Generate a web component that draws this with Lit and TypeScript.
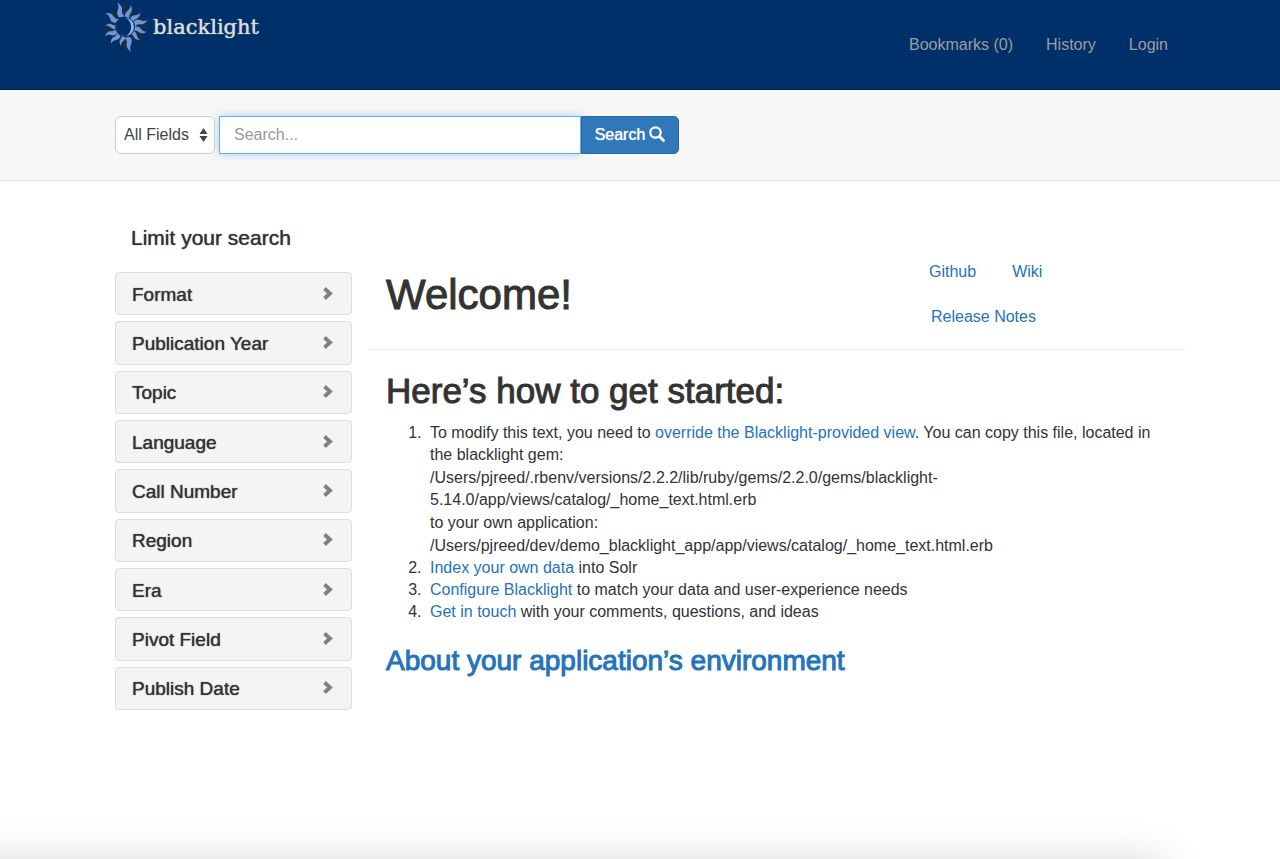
import { LitElement, html, css, svg } from "lit";
import { customElement } from "lit/decorators.js";

const FACETS = [
  "Format",
  "Publication Year",
  "Topic",
  "Language",
  "Call Number",
  "Region",
  "Era",
  "Pivot Field",
  "Publish Date",
];

// One wavy flame of the sun, pointing up from the centre of a 48-unit square.
const FLAME =
  "M21 14.500C18.800 12.200 19.600 9.600 20.800 7.500C22 5.500 22.600 3.600 21.600 1C25 3.600 25.400 6.600 24.400 9.200C23.600 11.500 24.600 13.200 26 14.500Z";
const RAYS = [
  { angle: -12, size: 1.1 },
  { angle: 20, size: 0.98 },
  { angle: 52, size: 0.92 },
  { angle: 78, size: 1.02 },
  { angle: 108, size: 0.96 },
  { angle: 136, size: 0.86 },
  { angle: 172, size: 1.1 },
  { angle: 198, size: 0.84 },
  { angle: 226, size: 0.94 },
  { angle: 251, size: 0.96 },
  { angle: 279, size: 0.86 },
  { angle: 311, size: 1.04 },
];

const rays = (fill: string, turn: number) =>
  RAYS.map(
    (r) => svg`<path fill=${fill} d=${FLAME}
      transform="rotate(${r.angle + turn} 24 24) translate(24 24) scale(${r.size}) translate(-24 -24)"></path>`
  );

@customElement("app-root")
export class AppRoot extends LitElement {
  static styles = css`
    :host {
      display: block;
      position: relative;
      box-sizing: border-box;
      min-height: 100vh;
      overflow: hidden;
      background: #fff;
      color: #333;
      font: 16px/22px "Liberation Sans", Arial, sans-serif;
    }
    *, *::before, *::after { box-sizing: border-box; }
    a { color: #2473bb; text-decoration: none; }
    a:hover { text-decoration: underline; }
    h1, h2, h3, p, ul, ol { margin: 0; padding: 0; font-weight: 400; }
    .strong { text-shadow: 0 0 1px currentColor; }
    .heavy { -webkit-text-stroke: 1px currentColor; }

    .topbar {
      display: flex;
      justify-content: space-between;
      align-items: flex-start;
      min-height: 90px;
      padding: 0 112px 0 101px;
      background: #003069;
      border-bottom: 1px solid #02214a;
    }
    .brand { display: flex; align-items: center; gap: 4px; color: #dcdcd8; }
    .sun { width: 48px; height: 54px; }
    .wordmark { font: 21px/24px "DejaVu Serif", serif; }
    .nav { display: flex; gap: 33px; padding-top: 34px; list-style: none; }
    .nav a { color: #9d9d9d; }

    .searchbar {
      padding: 26px 95px 26px 115px;
      background: #f7f7f7;
      border-bottom: 1px solid #e3e3e3;
    }
    .search { display: flex; max-width: 564px; }
    .field { position: relative; flex: none; margin-right: 4px; }
    .field select {
      appearance: none;
      width: 100px;
      height: 38px;
      padding: 0 8px;
      border: 1px solid #ccc;
      border-radius: 6px;
      background: #fff;
      color: #444;
      font: inherit;
    }
    .arrows { position: absolute; right: 7px; top: 12px; width: 9px; height: 14px; pointer-events: none; }
    .query {
      flex: 1;
      min-width: 0;
      height: 38px;
      padding: 0 14px;
      border: 1px solid #66afe9;
      border-radius: 0;
      outline: none;
      background: #fff;
      box-shadow: 0 0 8px rgba(102, 175, 233, 0.6);
      color: #555;
      font: inherit;
    }
    .query::placeholder { color: #999; opacity: 1; }
    .go {
      position: relative;
      display: flex;
      align-items: center;
      justify-content: center;
      gap: 4px;
      width: 98px;
      height: 38px;
      padding: 0;
      border: 1px solid #2a68a6;
      border-radius: 0 5px 5px 0;
      background: #3078ba;
      color: #fff;
      font: inherit;
    }
    .go svg { width: 16px; height: 16px; margin-bottom: 2px; }

    .page {
      display: grid;
      grid-template-columns: 237px minmax(0, 1fr);
      column-gap: 18px;
      padding: 44px 95px 40px 115px;
    }
    .limit { padding-left: 16px; margin-bottom: 21px; font-size: 21px; line-height: 26px; }
    .facets { display: grid; grid-auto-rows: 1fr; gap: 6px; min-height: 438px; list-style: none; }
    .facets h3 { height: 100%; font-size: 19px; }
    .facet {
      display: flex;
      align-items: center;
      justify-content: space-between;
      width: 100%;
      height: 100%;
      padding: 2px 17px 0 16px;
      border: 1px solid #ddd;
      border-radius: 4px;
      background: #f4f4f4;
      color: #333;
      font: inherit;
      text-align: left;
    }
    .facet svg { width: 12px; height: 14px; margin-bottom: 2px; }

    .intro {
      display: grid;
      grid-template-columns: minmax(0, 1fr) 256px;
      align-items: center;
      margin-top: 36px;
      padding: 0 0 21px 16px;
      border-bottom: 1px solid #eee;
    }
    .intro h1 { font-size: 42px; line-height: 46px; }
    .links { display: flex; flex-wrap: wrap; column-gap: 36px; row-gap: 23px; max-width: 160px; list-style: none; }
    .links li:last-child { padding-left: 2px; }
    .body { padding: 22px 16px 0 16px; }
    .body h2 { font-size: 35px; line-height: 38px; }
    .steps { padding-left: 40px; margin: 12px 0 23px; }
    .steps li { padding-left: 4px; }
    .steps p + p { margin-top: 1px; }
    .body .about { font-size: 28px; line-height: 30px; }

    .glow {
      position: absolute;
      left: -60px;
      right: 115px;
      bottom: -60px;
      height: 60px;
      border-radius: 8px;
      box-shadow: 0 0 42px rgba(0, 0, 0, 0.15);
      pointer-events: none;
    }
  `;

  render() {
    return html`
      <header class="topbar">
        <a class="brand" href="#" aria-label="blacklight">
          <svg class="sun" viewBox="0 0 48 54" aria-hidden="true">
            <g transform="translate(0 3)">
              ${rays("#262c33", 12)}
              ${rays("#6b97e0", 0)}
              <circle cx="24" cy="24" r="9" fill="#003069"></circle>
              <path d="M24 14.500a9.500 9.500 0 0 1 0 19a10.500 10.500 0 0 0 0 -19Z" fill="#8fb2ee"></path>
              <circle cx="24" cy="24" r="9.500" fill="none" stroke="#12305f" stroke-width="1"></circle>
            </g>
          </svg>
          <span class="wordmark strong">blacklight</span>
        </a>
        <nav aria-label="User">
          <ul class="nav">
            <li><a href="#">Bookmarks (0)</a></li>
            <li><a href="#">History</a></li>
            <li><a href="#">Login</a></li>
          </ul>
        </nav>
      </header>

      <div class="searchbar">
        <form class="search" role="search" @submit=${(e: Event) => e.preventDefault()}>
          <div class="field">
            <select aria-label="Search in"><option>All Fields</option></select>
            <svg class="arrows" viewBox="0 0 9 14" aria-hidden="true">
              <path d="M4.500 0L8.500 6H.5ZM4.500 14L.5 8H8.500Z" fill="#444"></path>
            </svg>
          </div>
          <input class="query" type="text" aria-label="Search for" placeholder="Search..." />
          <button class="go strong" type="submit">
            Search
            <svg viewBox="0 0 16 16" aria-hidden="true">
              <circle cx="6.500" cy="6.500" r="5.200" fill="none" stroke="#fff" stroke-width="2.200"></circle>
              <path d="M10.500 10.500L14.500 14.500" stroke="#fff" stroke-width="2.800" stroke-linecap="round"></path>
            </svg>
          </button>
        </form>
      </div>

      <div class="page">
        <aside>
          <h2 class="limit strong">Limit your search</h2>
          <ul class="facets">
            ${FACETS.map(
              (name) => html`<li>
                <h3>
                  <button class="facet strong" type="button">
                    ${name}
                    <svg viewBox="0 0 12 14" aria-hidden="true">
                      <path d="M2.500 1.500L8 6.500L2.500 11.500" fill="none" stroke="#808080" stroke-width="3.800"></path>
                    </svg>
                  </button>
                </h3>
              </li>`
            )}
          </ul>
        </aside>

        <main>
          <div class="intro">
            <h1 class="heavy">Welcome!</h1>
            <ul class="links">
              <li><a href="#">Github</a></li>
              <li><a href="#">Wiki</a></li>
              <li><a href="#">Release Notes</a></li>
            </ul>
          </div>
          <div class="body">
            <h2 class="heavy">Here’s how to get started:</h2>
            <ol class="steps">
              <li>
                <p>
                  To modify this text, you need to
                  <a href="#">override the Blacklight-provided view</a>. You can copy this file,
                  located in the blacklight gem:
                </p>
                <p>/Users/pjreed/.rbenv/versions/2.2.2/lib/ruby/gems/2.2.0/gems/blacklight-<wbr />5.14.0/app/views/catalog/_home_text.html.erb</p>
                <p>to your own application:</p>
                <p>/Users/pjreed/dev/demo_blacklight_app/app/views/catalog/_home_text.html.erb</p>
              </li>
              <li><a href="#">Index your own data</a> into Solr</li>
              <li><a href="#">Configure Blacklight</a> to match your data and user-experience needs</li>
              <li><a href="#">Get in touch</a> with your comments, questions, and ideas</li>
            </ol>
            <h2 class="about heavy"><a href="#">About your application’s environment</a></h2>
          </div>
        </main>
      </div>
      <div class="glow"></div>
    `;
  }
}
